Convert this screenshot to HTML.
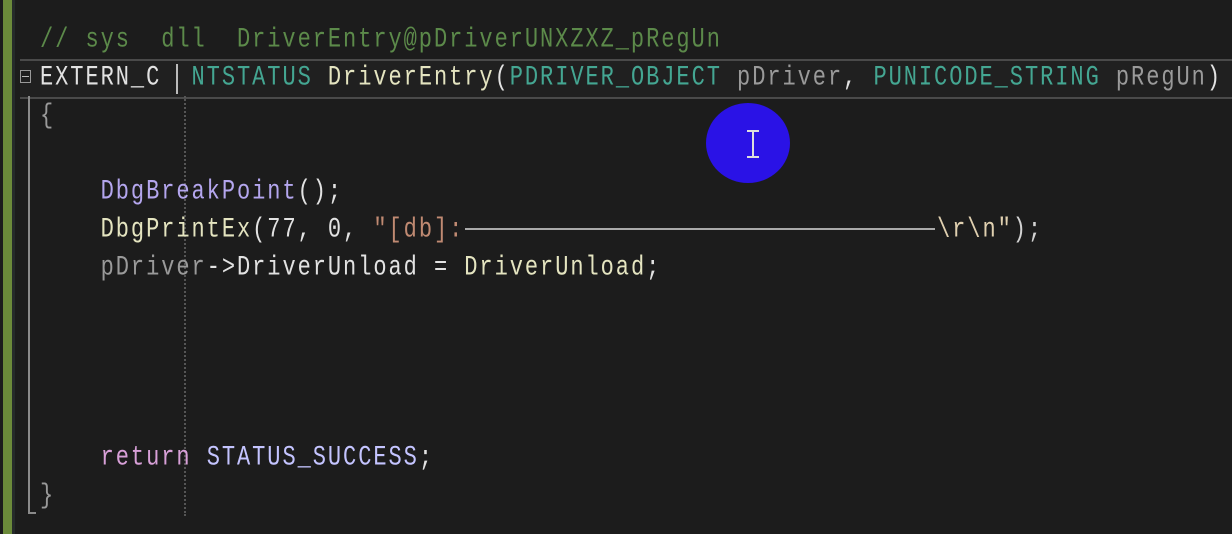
<!DOCTYPE html>
<html><head><meta charset="utf-8"><style>
html,body{margin:0;padding:0;width:1232px;height:534px;overflow:hidden;background:#1c1c1c;}
.l{position:absolute;left:40px;height:38px;line-height:38px;white-space:pre;font-family:"Liberation Mono",monospace;font-size:22px;letter-spacing:1.95px;color:#e2e2e2;transform:scaleY(1.25);transform-origin:left center;}
.cm{color:#5c8a4a}.ty{color:#4ec9b0;opacity:.8}.fn{color:#e4e4c0}.mc{color:#b4a6ee}.pa{color:#9a9a9a}.st{color:#c08a72}.kw{color:#d8a0d8}.en{color:#c4c4ff}
</style></head><body>
<div style="position:absolute;left:3px;top:0;width:9px;height:534px;background:#6b8a3a"></div>
<div style="position:absolute;left:12px;top:0;width:3px;height:534px;background:#252a2a"></div>
<div style="position:absolute;left:20px;top:59px;width:1212px;height:36px;border-top:2px solid #4a4a4a;border-bottom:2px solid #4a4a4a;background:#202020"></div>
<div style="position:absolute;left:28px;top:96px;width:2px;height:418px;background:#8a8a8a"></div>
<div style="position:absolute;left:28px;top:512px;width:8px;height:2px;background:#8a8a8a"></div>
<div style="position:absolute;left:184px;top:96px;width:0;height:420px;border-left:2px dotted #555"></div>
<div style="position:absolute;left:176px;top:64px;width:2px;height:30px;background:#bbb"></div>
<div style="position:absolute;left:20px;top:70px;width:11px;height:13px;border:1px solid #999;box-sizing:border-box"></div>
<div style="position:absolute;left:22px;top:76px;width:7px;height:1px;background:#bbb"></div>
<div class="l cm" style="top:21px">// sys  dll  DriverEntry@pDriverUNXZXZ_pRegUn</div>
<div class="l" style="top:59px">EXTERN_C  <span class="ty">NTSTATUS</span> <span class="fn">DriverEntry</span>(<span class="ty">PDRIVER_OBJECT</span> <span class="pa">pDriver</span>, <span class="ty">PUNICODE_STRING</span> <span class="pa">pRegUn</span>)</div>
<div class="l" style="top:97px;color:#999">{</div>
<div class="l" style="top:173px">    <span class="mc">DbgBreakPoint</span>();</div>
<div class="l" style="top:211px">    <span class="fn">DbgPrintEx</span>(77, 0, <span class="st">"[db]:</span></div>
<div style="position:absolute;left:465px;top:228px;width:470px;height:2px;background:#aaa"></div>
<div class="l st" style="top:211px;left:937px;color:#e0d0b0">\r\n"<span style="color:#d2d2d2">);</span></div>
<div class="l" style="top:249px">    <span class="pa">pDriver</span>-&gt;DriverUnload = <span class="fn">DriverUnload</span>;</div>
<div class="l" style="top:439px">    <span class="kw">return</span> <span class="en">STATUS_SUCCESS</span>;</div>
<div class="l" style="top:477px;color:#999">}</div>
<div style="position:absolute;left:706px;top:103px;width:84px;height:80px;border-radius:50%;background:#2a12e6"></div>
<div style="position:absolute;left:752px;top:131px;width:2px;height:26px;background:#ddd"></div>
<div style="position:absolute;left:747px;top:130px;width:12px;height:2px;background:#ddd"></div>
<div style="position:absolute;left:747px;top:156px;width:12px;height:2px;background:#ddd"></div>
</body></html>
